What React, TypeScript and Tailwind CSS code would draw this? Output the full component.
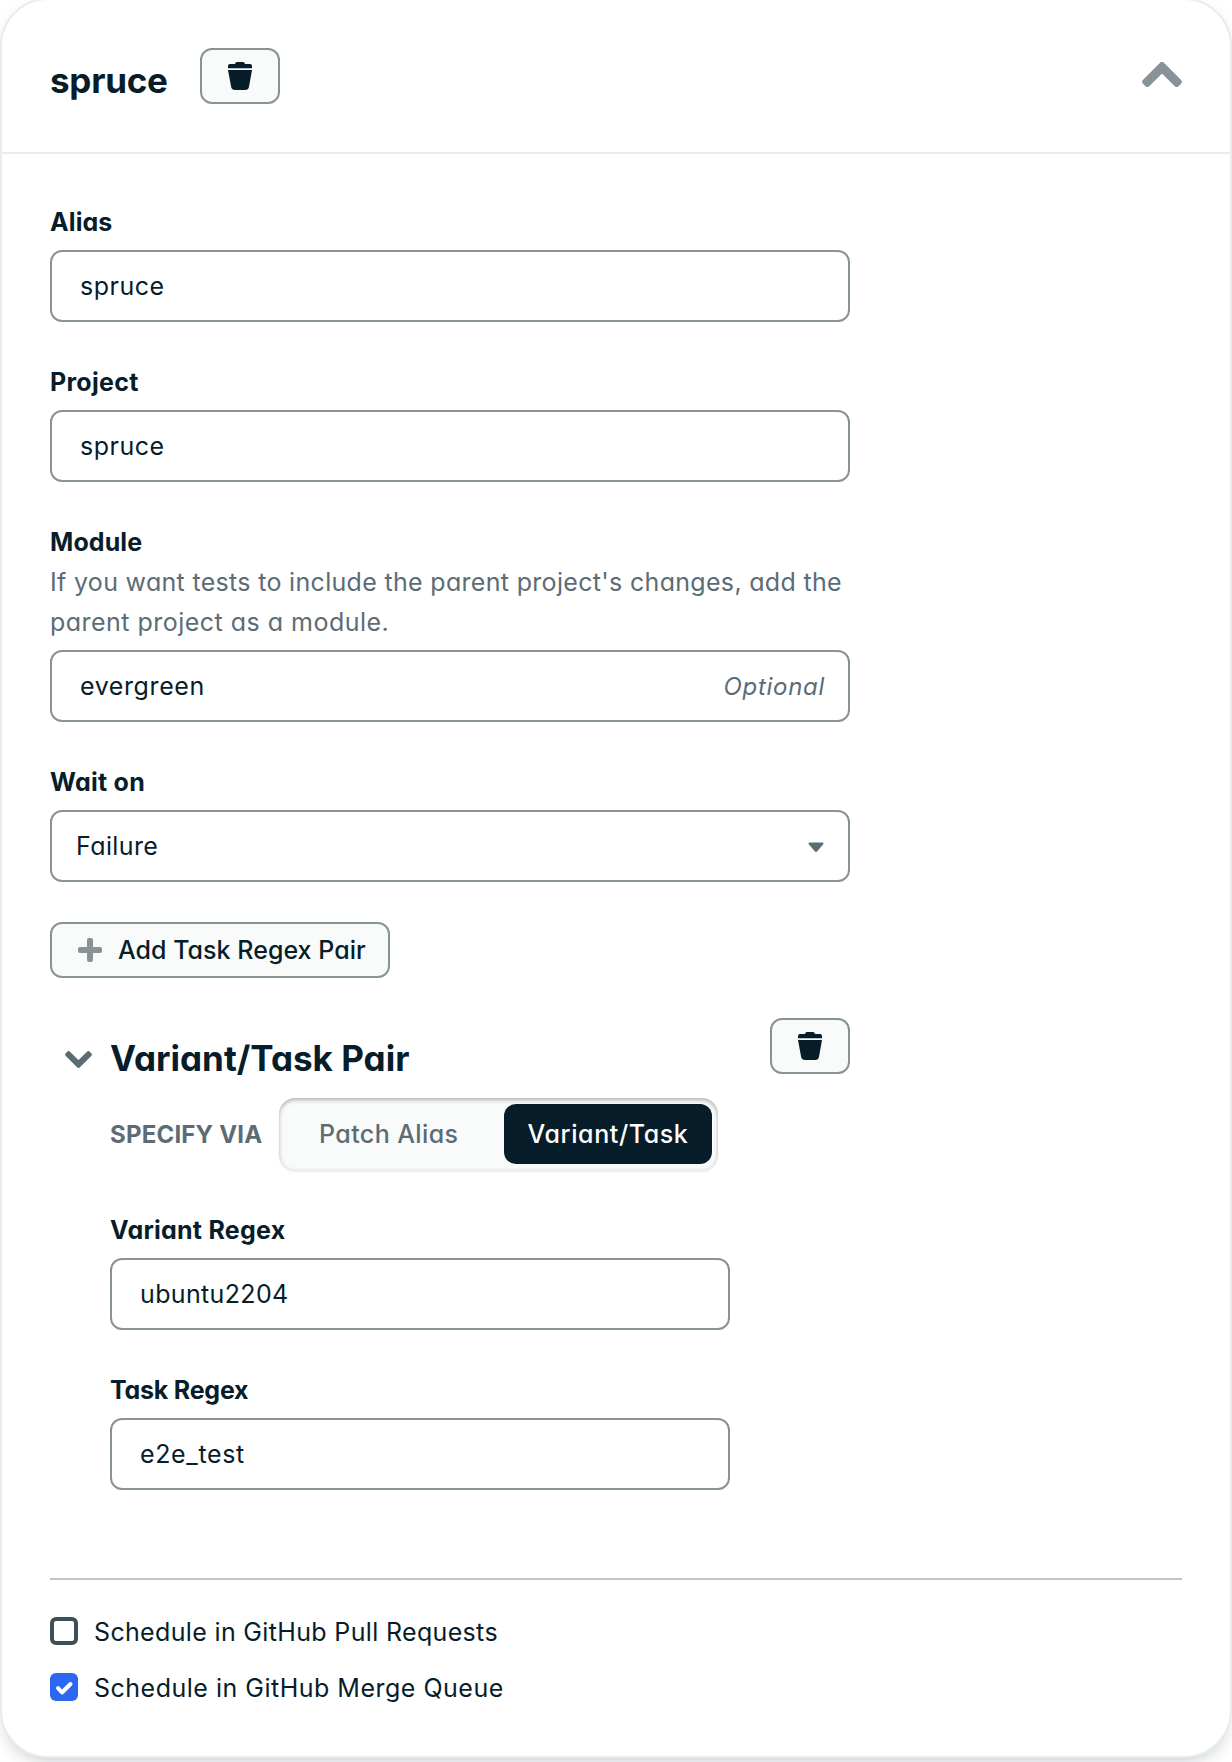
import type { ReactNode } from "react";

function TrashIcon() {
  return (
    <svg width="32" height="32" viewBox="0 0 32 32" fill="currentColor">
      <path d="M11 4c.5-1.400 1.200-2 2.500-2h5c1.300 0 2 .6 2.500 2h5a2 2 0 0 1 2 2v2.300H4V6a2 2 0 0 1 2-2Z" />
      <path d="M4 10h24l-3 16.800A4 4 0 0 1 21 30H11a4 4 0 0 1-3.900-3.200Z" />
    </svg>
  );
}

function Chevron({ className }: { className: string }) {
  return (
    <svg viewBox="0 0 40 25" className={className} fill="currentColor" stroke="currentColor" strokeWidth="6" strokeLinejoin="round">
      <path d="M20 3.040 3.240 19.800 5.350 21.900 20 7.260 34.650 21.900 36.760 19.800Z" />
    </svg>
  );
}

function TrashButton() {
  return (
    <button className="flex h-14 w-20 shrink-0 items-start justify-center rounded-xl border-2 border-[#889397] bg-[#f9fbfa] pt-2.5">
      <TrashIcon />
    </button>
  );
}

function Field({ label, labelClass, description, children }: {
  label: string;
  labelClass: string;
  description?: ReactNode;
  children: ReactNode;
}) {
  return (
    <div>
      <div className={`h-[38px] text-[25px] leading-10 font-bold whitespace-nowrap ${labelClass}`}>{label}</div>
      {description ? <div className="pt-0.5 pb-2 text-[25px] leading-10 text-[#5c6c75]">{description}</div> : <div className="h-2.5" />}
      {children}
    </div>
  );
}

function InputBox({ children }: { children: ReactNode }) {
  return (
    <div className="flex h-[72px] items-center justify-between rounded-xl border-2 border-[#889397] bg-white pt-0.5 pr-6 pl-7 text-[25px]">
      {children}
    </div>
  );
}

export default function App() {
  return (
    <div className="h-[1762px] w-full overflow-hidden bg-white font-['Inter',sans-serif] text-[#071d2a] [font-feature-settings:'cv11']">
      <div className="-mt-0.5 flex h-[1760px] flex-col rounded-[48px] border-2 border-[#e8edeb] bg-white shadow-[0_8px_20px_-8px_rgba(0,30,43,0.3)]">
        <header className="flex h-[154px] shrink-0 items-start justify-between border-b-2 border-[#e8edeb] pt-12 pr-12 pl-12">
          <div className="flex">
            <h2 className="w-[150px] pt-1 text-[35px] leading-[56px] font-bold tracking-[-0.25px]">spruce</h2>
            <TrashButton />
          </div>
          <Chevron className="mt-3.5 h-[25px] w-10 text-[#889397]" />
        </header>

        <main className="px-12 pt-12">
          <div className="flex w-[800px] flex-col gap-10">
            <Field label="Alias" labelClass="tracking-[0.1px]">
              <InputBox><span className="tracking-[0.5px]">spruce</span></InputBox>
            </Field>
            <Field label="Project" labelClass="tracking-[0.3px]">
              <InputBox><span className="tracking-[0.5px]">spruce</span></InputBox>
            </Field>
            <Field
              label="Module"
              labelClass="tracking-[0.1px]"
              description={
                <>
                  <span className="block tracking-[0.315px] whitespace-nowrap">If you want tests to include the parent project's changes, add the</span>
                  <span className="block tracking-[0.48px] whitespace-nowrap">parent project as a module.</span>
                </>
              }
            >
              <InputBox>
                <span className="tracking-[0.6px]">evergreen</span>
                <span className="-mr-px text-[24px] tracking-[0.7px] text-[#5c6c75] italic">Optional</span>
              </InputBox>
            </Field>
            <Field label="Wait on" labelClass="tracking-[0.25px]">
              <InputBox>
                <span className="-ml-1 tracking-[0.4px]">Failure</span>
                <svg width="16" height="11" viewBox="0 0 16 11" className="text-[#5c6c75]" fill="currentColor" stroke="currentColor" strokeWidth="2" strokeLinejoin="round">
                  <path d="M1.500 1.500h13L8 9Z" />
                </svg>
              </InputBox>
            </Field>
            <button className="flex h-14 w-[340px] items-center rounded-xl border-2 border-[#889397] bg-[#f9fbfa] pl-[26px]">
              <svg width="24" height="24" viewBox="0 0 24 24" className="mr-4 shrink-0 text-[#889397]" fill="currentColor">
                <rect x="9" y="0" width="6" height="24" rx="2" />
                <rect x="0" y="9" width="24" height="6" rx="2" />
              </svg>
              <span className="text-[25px] leading-10 font-medium tracking-[0.03px] whitespace-nowrap">Add Task Regex Pair</span>
            </button>
          </div>

          <section className="mt-10 w-[800px]">
            <div className="flex h-20 items-start">
              <Chevron className="mt-[33px] ml-[15px] h-[17px] w-[27px] rotate-180 text-[#5c6c75]" />
              <h3 className="ml-[18px] flex-1 text-[35px] leading-[80px] font-bold whitespace-nowrap">Variant/Task Pair</h3>
              <TrashButton />
            </div>
            <div className="flex h-[72px] items-center pl-[60px]">
              <span className="w-[169px] pt-px text-[24px] font-bold tracking-[0.2px] whitespace-nowrap text-[#5c6c75]">SPECIFY VIA</span>
              <div className="flex h-[72px] w-[439px] rounded-2xl bg-[#f9fbfa] p-1.5 shadow-[inset_0_2px_4px_rgba(0,0,0,0.3),0_2px_2px_#e8edeb]">
                <div className="w-[219px] pl-[34px] text-[25px] leading-[60px] font-medium tracking-[0.4px] whitespace-nowrap text-[#5c6c75]">Patch Alias</div>
                <div className="h-[60px] w-[208px] rounded-xl bg-[#071d2a] text-center text-[25px] leading-[60px] font-medium tracking-[0.6px] whitespace-nowrap text-white">Variant/Task</div>
              </div>
            </div>
            <div className="mt-10 ml-[60px] flex w-[620px] flex-col gap-10">
              <Field label="Variant Regex" labelClass="tracking-[0.25px]">
                <InputBox><span className="tracking-[0.35px]">ubuntu2204</span></InputBox>
              </Field>
              <Field label="Task Regex" labelClass="tracking-[-0.23px]">
                <InputBox><span className="tracking-[0.65px]">e2e_test</span></InputBox>
              </Field>
            </div>
          </section>

          <hr className="mt-[88px] border-t-2 border-[#c1c7c6]" />

          <div className="mt-[37px] flex flex-col gap-7">
            <label className="flex h-7 items-center gap-4 text-[25px]">
              <span className="h-7 w-7 rounded-md border-4 border-[#3d4f58] bg-white" />
              <span className="pt-[3px] tracking-[0.34px]">Schedule in GitHub Pull Requests</span>
            </label>
            <label className="flex h-7 items-center gap-4 text-[25px]">
              <span className="h-7 w-7 rounded-md bg-[#2c67f2]">
                <svg width="28" height="28" viewBox="0 0 28 28" fill="none" stroke="white" strokeWidth="4" strokeLinecap="round" strokeLinejoin="round">
                  <path d="m8 15.200 4 4.300L20.500 11" />
                </svg>
              </span>
              <span className="pt-[3px] tracking-[0.5px]">Schedule in GitHub Merge Queue</span>
            </label>
          </div>
        </main>
      </div>
    </div>
  );
}
